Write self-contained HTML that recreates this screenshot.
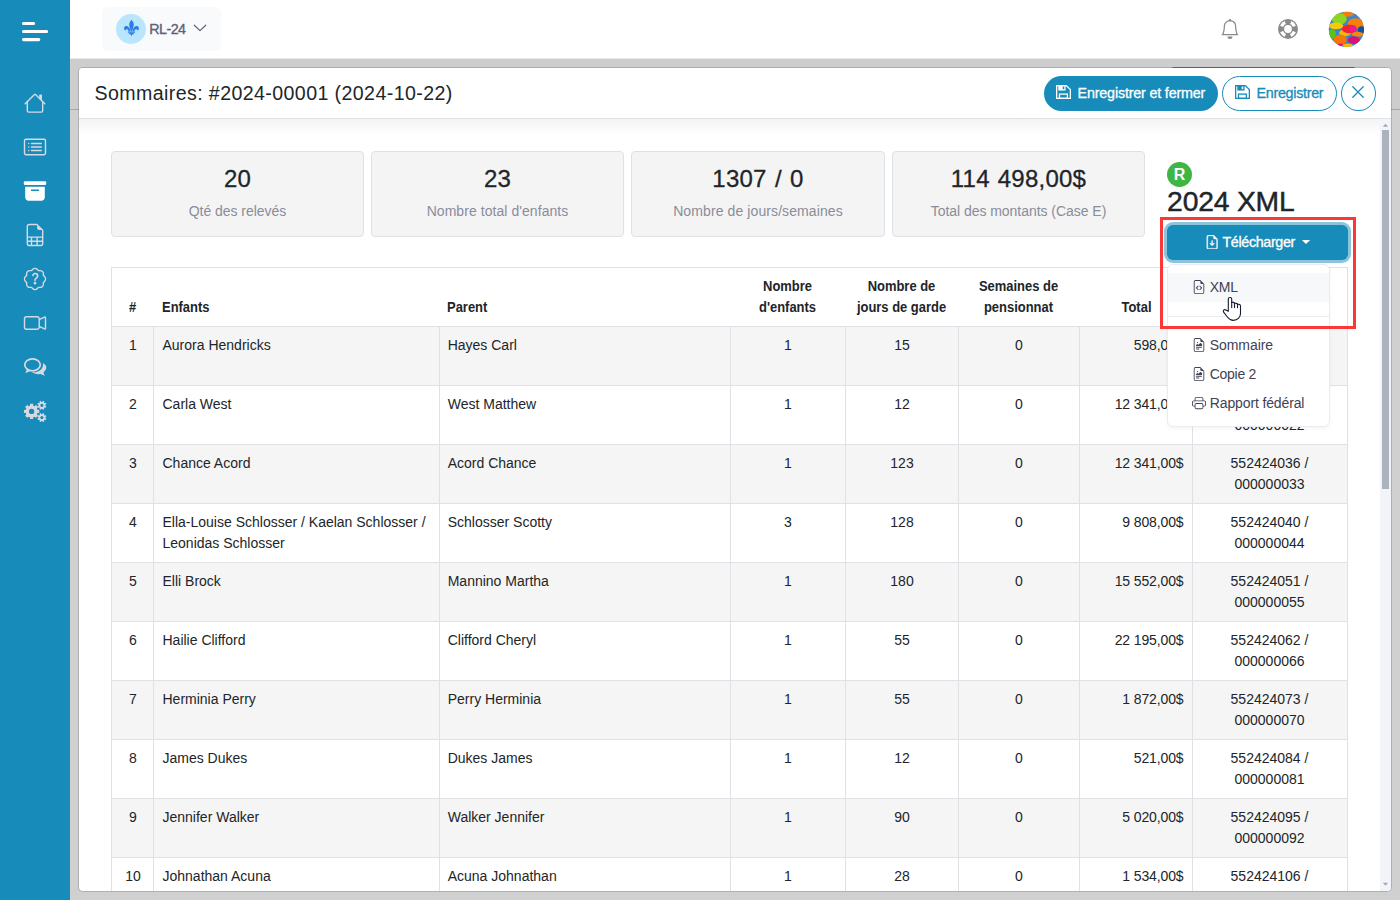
<!DOCTYPE html>
<html lang="fr">
<head>
<meta charset="utf-8">
<title>Sommaires</title>
<style>
*{box-sizing:border-box;margin:0;padding:0}
html,body{width:1400px;height:900px;overflow:hidden}
body{font-family:"Liberation Sans",sans-serif;background:#d0d0d0;color:#212529;position:relative;font-size:14.3px}
.abs{position:absolute}
/* sidebar */
#side{left:0;top:0;width:70px;height:900px;background:#178bb9}
#side svg{position:absolute;left:0;top:0}
/* topbar */
#top{left:70px;top:0;width:1330px;height:58px;background:#fff}
#pill{left:102px;top:7px;width:119px;height:44px;background:#f9fafb;border-radius:6px}
#pillc{left:116px;top:14px;width:30px;height:30px;border-radius:50%;background:#b9e6fd}
#pillt{left:149.3px;top:20px;font-size:14.3px;font-weight:normal;-webkit-text-stroke:0.35px;letter-spacing:-0.55px;color:#5e6278;line-height:18px;white-space:nowrap}
/* backdrop details */
#bgline{left:70px;top:109px;width:1330px;height:1px;background:#a6a6a6}
#bgtop{left:70px;top:58px;width:1330px;height:51px;background:#cdcdcd;border-top:1px solid #e6eaec}
#peek{left:1171px;top:67px;width:185px;height:6px;background:#3883a9;border-radius:3px 3px 0 0}
/* modal */
#modal{left:78px;top:67px;width:1314px;height:825px;background:#fff;background-clip:padding-box;border-radius:5px;overflow:hidden;border:1px solid rgba(0,0,0,.155)}
#mi{left:-1px;top:-1px;width:1313px;height:824px}
#mhead{left:0;top:0;width:1313px;height:52px;border-bottom:1px solid #dee2e6;background:#fff}
#mshadow{left:0;top:52px;width:1302px;height:15px;background:linear-gradient(#f3f3f4,#fff)}
#title{left:16.5px;top:12px;font-size:19.6px;line-height:28px;letter-spacing:0.4px;white-space:nowrap;color:#212529}
.btn{margin-top:1px;height:35px;border-radius:18px;font-size:14.3px;line-height:33px;white-space:nowrap}
#b1{left:966px;top:8px;width:174px;background:#178bb9;color:#fff;font-weight:bold}
#b2{left:1144px;top:8px;width:115px;border:1px solid #178bb9;color:#178bb9;background:#fff}
#b3{left:1263px;top:8px;width:34.5px;border:1px solid #178bb9;background:#fff;border-radius:50%}
/* scrollbar */
#sb{left:1302px;top:52px;width:11px;height:772px;background:#f3f4f9}
#sbthumb{left:1304px;top:63px;width:7px;height:359px;background:#adb3bd}
/* cards */
.card{top:84px;width:253px;height:86px;background:#f4f4f4;border:1px solid #dee2e6;border-radius:4px;text-align:center}
.card b{display:block;font-weight:normal;font-size:24px;line-height:30px;margin-top:12px;letter-spacing:0.25px;-webkit-text-stroke:0.3px;color:#212529;white-space:nowrap}
.card i{display:block;font-style:normal;font-size:14px;line-height:20px;margin-top:7px;letter-spacing:-0.04px;color:#8a8c99;white-space:nowrap}
/* table */
#tbl{left:33px;top:200px;width:1237px;height:640px;border:1px solid #dee2e6;border-bottom:none}
.row{left:0;width:1235px;height:59px;border-top:1px solid #dee2e6}
.row.odd{background:#f5f5f5}
.row span{position:absolute;top:8px;line-height:21px;font-size:14px;color:#212529;white-space:nowrap}
.vl{top:59px;width:1px;height:600px;background:#dee2e6}
.c1{left:0.5px;width:41px;text-align:center}
.c2{left:50.5px}
.c3{left:335.7px}
.c4{left:618.5px;width:115px;text-align:center}
.c5{left:733.5px;width:113px;text-align:center}
.c6{left:846.5px;width:121px;text-align:center}
.c7{right:163.5px;text-align:right;letter-spacing:-0.12px}
.c7h{left:967.8px;width:113px;text-align:center}
.th.c4,.th.c5,.th.c6,.th.c7h{transform-origin:50% 50%}
.th.c4{left:617.7px}.th.c5{left:732.7px}.th.c6{left:845.7px}
.c8{left:1080px;width:155px;text-align:center}
.th{font-weight:bold;font-size:14px;transform:scaleX(0.925);transform-origin:0 50%;line-height:21px;color:#212529;white-space:nowrap;text-align:center}
.bt{font-size:14.3px;line-height:21px;white-space:nowrap;-webkit-text-stroke:0.3px}
.di{font-size:14px;line-height:21px;white-space:nowrap;color:#3f4254}
#xmlt{left:1167.1px;top:185px;font-size:28.3px;line-height:32px;white-space:nowrap;color:#212529;-webkit-text-stroke:0.45px;letter-spacing:-0.2px}
#dd{left:1167px;top:264px;width:163px;height:163px;background:#fff;border:1px solid #e9ebf0;border-radius:6px;box-shadow:0 2px 5px rgba(0,0,0,.04)}
</style>
</head>
<body>
<div id="side" class="abs"><svg width="70" height="900" viewBox="0 0 70 900"><g stroke="#fff" stroke-width="3.1" stroke-linecap="round"><path d="M23.500 23.500H33.600M23.500 31.500H46.600M23.500 39.600H38.800"/></g><g transform="translate(23.8 91.8) scale(1.4)" fill="#d8dae3"><path fill-rule="evenodd" d="M2 13.5V7h1v6.500a.5.500 0 0 0 .5.500h9a.5.500 0 0 0 .5-.5V7h1v6.500a1.500 1.500 0 0 1-1.500 1.500h-9A1.500 1.500 0 0 1 2 13.500zm11-11V6l-2-2V2.500a.5.500 0 0 1 .5-.5h1a.5.500 0 0 1 .5.500z"/><path fill-rule="evenodd" d="M7.293 1.500a1 1 0 0 1 1.414 0l6.647 6.646a.5.500 0 0 1-.708.708L8 2.207 1.354 8.854a.5.500 0 1 1-.708-.708L7.293 1.500z"/></g><g transform="translate(23.8 135.8) scale(1.4)" fill="#d8dae3"><path d="M14.500 3a.5.500 0 0 1 .5.500v9a.5.500 0 0 1-.5.500h-13a.5.500 0 0 1-.5-.5v-9a.5.500 0 0 1 .5-.5h13zm-13-1A1.500 1.500 0 0 0 0 3.500v9A1.500 1.500 0 0 0 1.500 14h13a1.500 1.500 0 0 0 1.500-1.500v-9A1.500 1.500 0 0 0 14.500 2h-13z"/><path d="M5 8a.5.500 0 0 1 .5-.5h7a.5.500 0 0 1 0 1h-7A.5.500 0 0 1 5 8zm0-2.500a.5.500 0 0 1 .5-.5h7a.5.500 0 0 1 0 1h-7a.5.500 0 0 1-.5-.5zm0 5a.5.500 0 0 1 .5-.5h7a.5.500 0 0 1 0 1h-7a.5.500 0 0 1-.5-.5zm-1-5a.5.500 0 1 1-1 0 .5.500 0 0 1 1 0zM4 8a.5.500 0 1 1-1 0 .5.500 0 0 1 1 0zm0 2.500a.5.500 0 1 1-1 0 .5.500 0 0 1 1 0z"/></g><g transform="translate(23.8 179.8) scale(1.4)" fill="#fff"><path d="M12.643 15C13.979 15 15 13.845 15 12.500V5H1v7.500C1 13.845 2.021 15 3.357 15h9.286zM5.500 7h5a.5.500 0 0 1 0 1h-5a.5.500 0 0 1 0-1zM.8 1a.8.800 0 0 0-.8.800V3a.8.800 0 0 0 .8.800h14.400A.8.800 0 0 0 16 3V1.800a.8.800 0 0 0-.8-.8H.8z"/></g><g transform="translate(23.8 223.8) scale(1.4)" fill="#d8dae3"><path d="M14 14V4.500L9.500 0H4a2 2 0 0 0-2 2v12a2 2 0 0 0 2 2h8a2 2 0 0 0 2-2zM9.500 3A1.500 1.500 0 0 0 11 4.500h2V9H3V2a1 1 0 0 1 1-1h5.500v2zM3 12v-2h2v2H3zm0 1h2v2H4a1 1 0 0 1-1-1v-1zm3 2v-2h3v2H6zm4 0v-2h3v1a1 1 0 0 1-1 1h-2zm3-3h-3v-2h3v2zm-7 0v-2h3v2H6z"/></g><g transform="translate(23.8 267.8) scale(1.4)" fill="#d8dae3"><path d="M8.050 9.600c.336 0 .504-.24.554-.627.040-.534.198-.815.847-1.260.673-.475 1.049-1.090 1.049-1.986 0-1.325-.92-2.227-2.262-2.227-1.020 0-1.792.492-2.100 1.290A1.710 1.710 0 0 0 6 5.480c0 .393.203.640.545.640.272 0 .455-.147.564-.51.158-.592.525-.915 1.074-.915.610 0 1.030.446 1.030 1.084 0 .563-.208.885-.822 1.325-.619.433-.926.914-.926 1.640v.111c0 .428.208.745.585.745z"/><path d="m10.273 2.513-.921-.944.715-.698.622.637.890-.011a2.890 2.890 0 0 1 2.924 2.924l-.010.890.636.622a2.890 2.890 0 0 1 0 4.134l-.637.622.011.890a2.890 2.890 0 0 1-2.924 2.924l-.890-.010-.622.636a2.890 2.890 0 0 1-4.134 0l-.622-.637-.890.011a2.890 2.890 0 0 1-2.924-2.924l.010-.890-.636-.622a2.890 2.890 0 0 1 0-4.134l.637-.622-.011-.890a2.890 2.890 0 0 1 2.924-2.924l.890.010.622-.636a2.890 2.890 0 0 1 4.134 0l-.715.698a1.890 1.890 0 0 0-2.704 0l-.920.944-1.320-.016a1.890 1.890 0 0 0-1.911 1.912l.016 1.318-.944.921a1.890 1.890 0 0 0 0 2.704l.944.920-.016 1.320a1.890 1.890 0 0 0 1.912 1.911l1.318-.016.921.944a1.890 1.890 0 0 0 2.704 0l.920-.944 1.320.016a1.890 1.890 0 0 0 1.911-1.912l-.016-1.318.944-.921a1.890 1.890 0 0 0 0-2.704l-.944-.920.016-1.320a1.890 1.890 0 0 0-1.912-1.911l-1.318.016z"/><path d="M7.001 11a1 1 0 1 1 2 0 1 1 0 0 1-2 0z"/></g><g transform="translate(23.8 311.8) scale(1.4)" fill="#d8dae3"><path fill-rule="evenodd" d="M0 5a2 2 0 0 1 2-2h7.500a2 2 0 0 1 1.983 1.738l3.110-1.382A1 1 0 0 1 16 4.269v7.462a1 1 0 0 1-1.406.913l-3.111-1.382A2 2 0 0 1 9.500 13H2a2 2 0 0 1-2-2V5zm11.500 5.175 3.500 1.556V4.269l-3.500 1.556v4.350zM2 4a1 1 0 0 0-1 1v6a1 1 0 0 0 1 1h7.500a1 1 0 0 0 1-1V5a1 1 0 0 0-1-1H2z"/></g><g fill="none" stroke="#d8dae3" stroke-width="1.700"><ellipse cx="32.500" cy="364.800" rx="7.800" ry="6"/></g><path fill="#d8dae3" d="M26.800 369.200 L25.400 373.200 L30.600 370.800Z"/><path fill="#d8dae3" d="M43 363C45.500 364.500 46.800 366.500 46.200 368.500C45.800 370 44.800 371.300 43.400 372.300L44.800 375.800L40.400 374C37.500 374.500 34 373.800 31.700 372.300C36 372.600 39.500 371.200 41.300 369.200C42.800 367.400 43.300 365.200 43 363Z"/><path fill="#d8dae3" fill-rule="evenodd" d="M37.36 409.73 L39.26 409.93 L39.26 412.87 L37.36 413.07 L36.86 414.29 L38.06 415.78 L35.98 417.86 L34.49 416.66 L33.27 417.16 L33.07 419.06 L30.13 419.06 L29.93 417.16 L28.71 416.66 L27.22 417.86 L25.14 415.78 L26.34 414.29 L25.84 413.07 L23.94 412.87 L23.94 409.93 L25.84 409.73 L26.34 408.51 L25.14 407.02 L27.22 404.94 L28.71 406.14 L29.93 405.64 L30.13 403.74 L33.07 403.74 L33.27 405.64 L34.49 406.14 L35.98 404.94 L38.06 407.02 L36.86 408.51Z M28.90 411.40 a2.70 2.70 0 1 0 5.40 0 a2.70 2.70 0 1 0 -5.40 0Z"/><path fill="#d8dae3" fill-rule="evenodd" d="M45.27 405.73 L46.39 406.30 L45.78 407.77 L44.59 407.38 L43.98 407.99 L44.37 409.18 L42.90 409.79 L42.33 408.67 L41.47 408.67 L40.90 409.79 L39.43 409.18 L39.82 407.99 L39.21 407.38 L38.02 407.77 L37.41 406.30 L38.53 405.73 L38.53 404.87 L37.41 404.30 L38.02 402.83 L39.21 403.22 L39.82 402.61 L39.43 401.42 L40.90 400.81 L41.47 401.93 L42.33 401.93 L42.90 400.81 L44.37 401.42 L43.98 402.61 L44.59 403.22 L45.78 402.83 L46.39 404.30 L45.27 404.87Z M40.30 405.30 a1.60 1.60 0 1 0 3.20 0 a1.60 1.60 0 1 0 -3.20 0Z"/><path fill="#d8dae3" fill-rule="evenodd" d="M45.27 418.03 L46.39 418.60 L45.78 420.07 L44.59 419.68 L43.98 420.29 L44.37 421.48 L42.90 422.09 L42.33 420.97 L41.47 420.97 L40.90 422.09 L39.43 421.48 L39.82 420.29 L39.21 419.68 L38.02 420.07 L37.41 418.60 L38.53 418.03 L38.53 417.17 L37.41 416.60 L38.02 415.13 L39.21 415.52 L39.82 414.91 L39.43 413.72 L40.90 413.11 L41.47 414.23 L42.33 414.23 L42.90 413.11 L44.37 413.72 L43.98 414.91 L44.59 415.52 L45.78 415.13 L46.39 416.60 L45.27 417.17Z M40.30 417.60 a1.60 1.60 0 1 0 3.20 0 a1.60 1.60 0 1 0 -3.20 0Z"/></svg></div>
<div id="top" class="abs"></div>
<div id="pill" class="abs"></div>
<div id="pillc" class="abs"></div>
<div id="pillt" class="abs">RL-24</div>
<svg class="abs" style="left:123px;top:19px" width="17" height="18" viewBox="0 0 17 18"><g fill="#2b7de9"><path d="M8.500 0.800 C10.600 3 11.200 5.200 10.600 7.400 C10.200 9 9.300 10.600 9.200 12.300 L7.800 12.300 C7.700 10.600 6.800 9 6.400 7.400 C5.800 5.200 6.400 3 8.500 0.800Z"/><path d="M7.400 12.300 C7.300 10.300 6.400 8.300 4.600 7.300 C2.900 6.400 1.100 7.300 1.100 9.300 C1.100 10.400 1.600 11.300 2.300 11.900 C2.300 10.700 3.100 9.900 4 10.200 C5 10.500 5.400 11.500 5.600 12.300Z"/><path d="M9.600 12.300 C9.700 10.300 10.600 8.300 12.400 7.300 C14.100 6.400 15.900 7.300 15.900 9.300 C15.900 10.400 15.400 11.300 14.700 11.900 C14.700 10.700 13.900 9.900 13 10.200 C12 10.500 11.600 11.500 11.400 12.300Z"/><rect x="4.800" y="12.400" width="7.400" height="1.300" rx="0.400"/><path d="M5.600 13.900 L11.400 13.900 C10.600 14.300 10.400 15 10.700 15.600 L9.400 15.300 L8.500 17.200 L7.600 15.300 L6.300 15.600 C6.600 15 6.400 14.300 5.600 13.900Z"/></g></svg><svg class="abs" style="left:192px;top:22px" width="16" height="12" viewBox="0 0 16 12"><path d="M2.300 3.200 L8 8.600 L13.700 3.200" fill="none" stroke="#5e6278" stroke-width="1.200" stroke-linecap="round" stroke-linejoin="round"/></svg><svg class="abs" style="left:1220px;top:19px" width="20" height="20" viewBox="0 0 16 16" fill="#8a8a8a"><path d="M8 16a2 2 0 0 0 2-2H6a2 2 0 0 0 2 2zM8 1.918l-.797.161A4.002 4.002 0 0 0 4 6c0 .628-.134 2.197-.459 3.742-.160.767-.376 1.566-.663 2.258h10.244c-.287-.692-.502-1.490-.663-2.258C12.134 8.197 12 6.628 12 6a4.002 4.002 0 0 0-3.203-3.920L8 1.917zM14.220 12c.223.447.481.801.780 1H1c.299-.199.557-.553.780-1C2.680 10.200 3 6.880 3 6c0-2.420 1.720-4.440 4.005-4.901a1 1 0 1 1 1.990 0A5.002 5.002 0 0 1 13 6c0 .880.320 4.200 1.220 6z"/></svg><svg class="abs" style="left:1278px;top:19px" width="20" height="20" viewBox="0 0 20 20"><circle cx="10" cy="10" r="10" fill="#8a8a8a"/><circle cx="10" cy="10" r="3.900" fill="#fff"/><path d="M14.88 12.07 L17.92 13.36 A8.60 8.60 0 0 1 13.36 17.92 L12.07 14.88 A5.30 5.30 0 0 0 14.88 12.07ZM7.93 14.88 L6.64 17.92 A8.60 8.60 0 0 1 2.08 13.36 L5.12 12.07 A5.30 5.30 0 0 0 7.93 14.88ZM5.12 7.93 L2.08 6.64 A8.60 8.60 0 0 1 6.64 2.08 L7.93 5.12 A5.30 5.30 0 0 0 5.12 7.93ZM12.07 5.12 L13.36 2.08 A8.60 8.60 0 0 1 17.92 6.64 L14.88 7.93 A5.30 5.30 0 0 0 12.07 5.12Z" fill="#fff"/></svg><svg class="abs" style="left:1321px;top:4px" width="50" height="50" viewBox="0 0 900 900"><defs><clipPath id="avc"><circle cx="457" cy="457" r="317"/></clipPath></defs><g clip-path="url(#avc)"><rect width="900" height="900" fill="#3a86c8"/><ellipse cx="470" cy="185" rx="123" ry="46" fill="#f57c0a"/><ellipse cx="330" cy="270" rx="134" ry="103" fill="#8fd41f"/><ellipse cx="270" cy="395" rx="129" ry="60" fill="#f7c90a"/><ellipse cx="625" cy="350" rx="146" ry="94" fill="#f77f0c"/><ellipse cx="730" cy="465" rx="67" ry="63" fill="#0f4fa0"/><ellipse cx="430" cy="520" rx="106" ry="63" fill="#f2b90c"/><ellipse cx="510" cy="450" rx="134" ry="78" fill="#f5222d"/><ellipse cx="570" cy="440" rx="69" ry="63" fill="#ee1a8a"/><ellipse cx="660" cy="545" rx="101" ry="46" fill="#f58a0a"/><ellipse cx="200" cy="540" rx="67" ry="86" fill="#5cc21a"/><ellipse cx="345" cy="640" rx="118" ry="92" fill="#f5760a"/><ellipse cx="590" cy="650" rx="112" ry="69" fill="#d4127a"/><ellipse cx="480" cy="745" rx="90" ry="34" fill="#f2b90c"/><ellipse cx="350" cy="735" rx="50" ry="23" fill="#ee1a6a"/></g></svg>
<div id="bgtop" class="abs"></div><div id="bgline" class="abs"></div>
<div id="peek" class="abs"></div>

<div id="modal" class="abs"><div id="mi" class="abs">
  <div id="mshadow" class="abs"></div>
  <div id="mhead" class="abs"></div>
  <div id="title" class="abs">Sommaires: #2024-00001 (2024-10-22)</div>
  <div id="b1" class="abs btn"></div>
  <div id="b2" class="abs btn"></div>
  <div id="b3" class="abs btn"></div>
  <div id="sb" class="abs"></div>
  <div id="sbthumb" class="abs"></div>
  <svg class="abs" style="left:1302px;top:55px" width="11" height="6" viewBox="0 0 11 6"><path d="M2.800 4.800L5.500 1.800L8.200 4.800Z" fill="#a3a8b2"/></svg>
  <svg class="abs" style="left:1302px;top:814px" width="11" height="6" viewBox="0 0 11 6"><path d="M2.800 1.800L5.500 4.800L8.200 1.800Z" fill="#a3a8b2"/></svg>
  <div class="abs card" style="left:33px"><b>20</b><i>Qté des relevés</i></div>
  <div class="abs card" style="left:293px"><b>23</b><i style="letter-spacing:0.06px">Nombre total d'enfants</i></div>
  <div class="abs card" style="left:553px;width:254px"><b style="word-spacing:1.3px">1307 / 0</b><i style="letter-spacing:0.1px">Nombre de jours/semaines</i></div>
  <div class="abs card" style="left:814px"><b style="word-spacing:1px">114 498,00$</b><i>Total des montants (Case E)</i></div>
  <div id="tbl" class="abs">
  <div class="abs th" style="left:17px;top:29px">#</div>
  <div class="abs th" style="left:50px;top:29px">Enfants</div>
  <div class="abs th" style="left:335px;top:29px">Parent</div>
  <div class="abs th c4" style="top:8px">Nombre<br>d'enfants</div>
  <div class="abs th c5" style="top:8px">Nombre de<br>jours de garde</div>
  <div class="abs th c6" style="top:8px">Semaines de<br>pensionnat</div>
  <div class="abs th c7h" style="top:29px">Total</div>
  <div class="row abs odd" style="top:58px"><span class="c1">1</span><span class="c2">Aurora Hendricks</span><span class="c3">Hayes Carl</span><span class="c4">1</span><span class="c5">15</span><span class="c6">0</span><span class="c7">598,00$</span><span class="c8">552424014 /<br>000000011</span></div>
  <div class="row abs" style="top:117px"><span class="c1">2</span><span class="c2">Carla West</span><span class="c3">West Matthew</span><span class="c4">1</span><span class="c5">12</span><span class="c6">0</span><span class="c7">12 341,00$</span><span class="c8">552424025 /<br>000000022</span></div>
  <div class="row abs odd" style="top:176px"><span class="c1">3</span><span class="c2">Chance Acord</span><span class="c3">Acord Chance</span><span class="c4">1</span><span class="c5">123</span><span class="c6">0</span><span class="c7">12 341,00$</span><span class="c8">552424036 /<br>000000033</span></div>
  <div class="row abs" style="top:235px"><span class="c1">4</span><span class="c2">Ella-Louise Schlosser / Kaelan Schlosser /<br>Leonidas Schlosser</span><span class="c3">Schlosser Scotty</span><span class="c4">3</span><span class="c5">128</span><span class="c6">0</span><span class="c7">9 808,00$</span><span class="c8">552424040 /<br>000000044</span></div>
  <div class="row abs odd" style="top:294px"><span class="c1">5</span><span class="c2">Elli Brock</span><span class="c3">Mannino Martha</span><span class="c4">1</span><span class="c5">180</span><span class="c6">0</span><span class="c7">15 552,00$</span><span class="c8">552424051 /<br>000000055</span></div>
  <div class="row abs" style="top:353px"><span class="c1">6</span><span class="c2">Hailie Clifford</span><span class="c3">Clifford Cheryl</span><span class="c4">1</span><span class="c5">55</span><span class="c6">0</span><span class="c7">22 195,00$</span><span class="c8">552424062 /<br>000000066</span></div>
  <div class="row abs odd" style="top:412px"><span class="c1">7</span><span class="c2">Herminia Perry</span><span class="c3">Perry Herminia</span><span class="c4">1</span><span class="c5">55</span><span class="c6">0</span><span class="c7">1 872,00$</span><span class="c8">552424073 /<br>000000070</span></div>
  <div class="row abs" style="top:471px"><span class="c1">8</span><span class="c2">James Dukes</span><span class="c3">Dukes James</span><span class="c4">1</span><span class="c5">12</span><span class="c6">0</span><span class="c7">521,00$</span><span class="c8">552424084 /<br>000000081</span></div>
  <div class="row abs odd" style="top:530px"><span class="c1">9</span><span class="c2">Jennifer Walker</span><span class="c3">Walker Jennifer</span><span class="c4">1</span><span class="c5">90</span><span class="c6">0</span><span class="c7">5 020,00$</span><span class="c8">552424095 /<br>000000092</span></div>
  <div class="row abs" style="top:589px"><span class="c1">10</span><span class="c2">Johnathan Acuna</span><span class="c3">Acuna Johnathan</span><span class="c4">1</span><span class="c5">28</span><span class="c6">0</span><span class="c7">1 534,00$</span><span class="c8">552424106 /<br>000000103</span></div>
  <div class="abs vl" style="left:41px"></div>
  <div class="abs vl" style="left:327px"></div>
  <div class="abs vl" style="left:618px"></div>
  <div class="abs vl" style="left:733px"></div>
  <div class="abs vl" style="left:846px"></div>
  <div class="abs vl" style="left:967px"></div>
  <div class="abs vl" style="left:1080px"></div>
  </div>
</div></div>
<svg class="abs" style="left:1056.3px;top:85px" width="15" height="14" viewBox="0 0 15 14"><path d="M0.650 0.650H10.300L14.350 4.600V13.350H0.650Z" fill="none" stroke="#fff" stroke-width="1.300" stroke-linejoin="miter"/><rect x="2.300" y="0.650" width="7.300" height="4.900" fill="#fff"/><rect x="6.700" y="1.500" width="1.600" height="2.700" fill="#178bb9"/><rect x="3.500" y="9.100" width="7.900" height="4.250" fill="none" stroke="#fff" stroke-width="1.300"/></svg>
<div class="abs bt" style="left:1077.6px;top:83px;color:#fff;letter-spacing:-0.17px">Enregistrer et fermer</div>
<svg class="abs" style="left:1234.5px;top:85px" width="15" height="14" viewBox="0 0 15 14"><path d="M0.650 0.650H10.300L14.350 4.600V13.350H0.650Z" fill="none" stroke="#178bb9" stroke-width="1.300" stroke-linejoin="miter"/><rect x="2.300" y="0.650" width="7.300" height="4.900" fill="#178bb9"/><rect x="6.700" y="1.500" width="1.600" height="2.700" fill="#fff"/><rect x="3.500" y="9.100" width="7.900" height="4.250" fill="none" stroke="#178bb9" stroke-width="1.300"/></svg>
<div class="abs bt" style="left:1256.500px;top:83px;color:#178bb9;letter-spacing:-0.28px">Enregistrer</div>
<svg class="abs" style="left:1349px;top:83.2px" width="18" height="18" viewBox="0 0 18 18"><path d="M3.800 3.800L14.200 14.200M14.200 3.800L3.800 14.200" stroke="#178bb9" stroke-width="1.300" stroke-linecap="round"/></svg>
<div class="abs" style="left:1167px;top:162px;width:25px;height:25px;border-radius:50%;background:#3fb544"></div>
<div class="abs" style="left:1167px;top:162px;width:25px;line-height:25px;text-align:center;color:#fff;font-weight:bold;font-size:16px">R</div>
<div class="abs" id="xmlt">2024 XML</div>
<div class="abs" style="left:1167px;top:225px;width:181px;height:35px;border-radius:6px;background:#178bb9;box-shadow:0 0 0 3px #8cc4dc"></div>
<svg class="abs" style="left:1205px;top:234.700px" width="14.300" height="14.300" viewBox="0 0 16 16" fill="#fff" stroke="#fff" stroke-width="0.45"><path d="M8.500 6.500a.5.500 0 0 0-1 0v3.793L6.354 9.146a.5.500 0 1 0-.708.708l2 2a.5.500 0 0 0 .708 0l2-2a.5.500 0 0 0-.708-.708L8.500 10.293V6.500z"/><path d="M14 14V4.500L9.500 0H4a2 2 0 0 0-2 2v12a2 2 0 0 0 2 2h8a2 2 0 0 0 2-2zM9.500 3A1.500 1.500 0 0 0 11 4.500h2V14a1 1 0 0 1-1 1H4a1 1 0 0 1-1-1V2a1 1 0 0 1 1-1h5.500v2z"/></svg>
<div class="abs bt" style="left:1222.400px;top:232px;color:#fff;letter-spacing:-0.33px">Télécharger</div>
<svg class="abs" style="left:1301px;top:239px" width="10" height="6" viewBox="0 0 10 6"><path d="M0.800 0.900H9.200L5 5.100Z" fill="#fff"/></svg>
<div class="abs" id="dd"></div>
<div class="abs" style="left:1168px;top:273px;width:161px;height:29px;background:#f6f8fa"></div>
<div class="abs" style="left:1168px;top:316px;width:161px;height:1px;background:#e9ebf1"></div>
<svg class="abs" style="left:1192px;top:280.1px" width="14" height="14" viewBox="0 0 16 16" fill="#3f4254"><path d="M14 4.500V14a2 2 0 0 1-2 2H4a2 2 0 0 1-2-2V2a2 2 0 0 1 2-2h5.500L14 4.500zm-3 0A1.500 1.500 0 0 1 9.500 3V1H4a1 1 0 0 0-1 1v12a1 1 0 0 0 1 1h8a1 1 0 0 0 1-1V4.500h-2z"/><path d="M8.646 6.646a.5.500 0 0 1 .708 0l2 2a.5.500 0 0 1 0 .708l-2 2a.5.500 0 0 1-.708-.708L10.293 9 8.646 7.354a.5.500 0 0 1 0-.708zm-1.292 0a.5.500 0 0 0-.708 0l-2 2a.5.500 0 0 0 0 .708l2 2a.5.500 0 0 0 .708-.708L5.707 9l1.647-1.646a.5.500 0 0 0 0-.708z"/></svg><div class="abs di" style="left:1209.800px;top:277px;letter-spacing:-0.3px">XML</div>
<svg class="abs" style="left:1192px;top:338.2px" width="14" height="14" viewBox="0 0 16 16" fill="#3f4254"><path d="M14 4.500V14a2 2 0 0 1-2 2H4a2 2 0 0 1-2-2V2a2 2 0 0 1 2-2h5.500L14 4.500zm-3 0A1.500 1.500 0 0 1 9.500 3V1H4a1 1 0 0 0-1 1v12a1 1 0 0 0 1 1h8a1 1 0 0 0 1-1V4.500h-2z"/><path d="M4.500 12.500A.5.500 0 0 1 5 12h3a.5.500 0 0 1 0 1H5a.5.500 0 0 1-.5-.5zm0-2A.5.500 0 0 1 5 10h6a.5.500 0 0 1 0 1H5a.5.500 0 0 1-.5-.5zm1.639-3.708 1.330.886 1.854-1.855a.25.250 0 0 1 .289-.047l1.888.974V8.500a.5.500 0 0 1-.5.500H5a.5.500 0 0 1-.5-.5V8s1.540-1.274 1.639-1.208zM6.250 6a.75.750 0 1 0 0-1.500.75.750 0 0 0 0 1.500z"/></svg><div class="abs di" style="left:1209.800px;top:335px;letter-spacing:-0.08px">Sommaire</div>
<svg class="abs" style="left:1192px;top:367.1px" width="14" height="14" viewBox="0 0 16 16" fill="#3f4254"><path d="M14 4.500V14a2 2 0 0 1-2 2H4a2 2 0 0 1-2-2V2a2 2 0 0 1 2-2h5.500L14 4.500zm-3 0A1.500 1.500 0 0 1 9.500 3V1H4a1 1 0 0 0-1 1v12a1 1 0 0 0 1 1h8a1 1 0 0 0 1-1V4.500h-2z"/><path d="M4.500 12.500A.5.500 0 0 1 5 12h3a.5.500 0 0 1 0 1H5a.5.500 0 0 1-.5-.5zm0-2A.5.500 0 0 1 5 10h6a.5.500 0 0 1 0 1H5a.5.500 0 0 1-.5-.5zm1.639-3.708 1.330.886 1.854-1.855a.25.250 0 0 1 .289-.047l1.888.974V8.500a.5.500 0 0 1-.5.500H5a.5.500 0 0 1-.5-.5V8s1.540-1.274 1.639-1.208zM6.250 6a.75.750 0 1 0 0-1.500.75.750 0 0 0 0 1.500z"/></svg><div class="abs di" style="left:1209.800px;top:364px;letter-spacing:-0.3px">Copie 2</div>
<svg class="abs" style="left:1192px;top:396px" width="14" height="14" viewBox="0 0 16 16" fill="#3f4254"><path d="M2.500 8a.5.500 0 1 0 0-1 .5.500 0 0 0 0 1z"/><path d="M5 1a2 2 0 0 0-2 2v2H2a2 2 0 0 0-2 2v3a2 2 0 0 0 2 2h1v1a2 2 0 0 0 2 2h6a2 2 0 0 0 2-2v-1h1a2 2 0 0 0 2-2V7a2 2 0 0 0-2-2h-1V3a2 2 0 0 0-2-2H5zM4 3a1 1 0 0 1 1-1h6a1 1 0 0 1 1 1v2H4V3zm1 5a2 2 0 0 0-2 2v1H2a1 1 0 0 1-1-1V7a1 1 0 0 1 1-1h12a1 1 0 0 1 1 1v3a1 1 0 0 1-1 1h-1v-1a2 2 0 0 0-2-2H5zm7 2v3a1 1 0 0 1-1 1H5a1 1 0 0 1-1-1v-3a1 1 0 0 1 1-1h6a1 1 0 0 1 1 1z"/></svg><div class="abs di" style="left:1209.800px;top:393px;letter-spacing:-0.13px">Rapport fédéral</div>
<div class="abs" style="left:1160px;top:217px;width:196px;height:112px;border:3px solid #fb3838"></div>
<svg class="abs" style="left:1210px;top:290px" width="40" height="36" viewBox="0 0 40 36"><path d="M18.300 21.300L18.300 9.100C18.300 6.900 21.700 6.900 21.700 9.100L21.700 12.400C23 12 24.400 12.400 24.500 13.400C25.800 13 27.400 13.400 27.500 14.400C29 14 30.500 14.600 30.500 16.200L30.500 23.500C30.500 27.500 27.500 30.400 23.300 30.400C20.500 30.400 18.800 28.800 17.400 27L13.600 22.200C12.600 20.800 14.200 19 15.800 19.900Z" fill="#fff" stroke="#141a30" stroke-width="1.100" stroke-linejoin="round"/><path d="M21.700 12.400V17.600M24.500 13.400V17.600M27.500 14.400V17.800" stroke="#141a30" stroke-width="1.100" fill="none" stroke-linecap="round"/></svg>
</body>
</html>
